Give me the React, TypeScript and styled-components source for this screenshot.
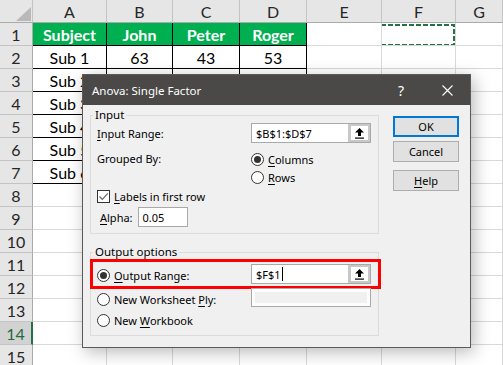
import React from 'react';
import styled, { createGlobalStyle, css } from 'styled-components';

const GlobalStyle = createGlobalStyle`
  html, body {
    margin: 0;
    padding: 0;
    background: #ffffff;
    overflow: hidden;
  }
  * {
    box-sizing: border-box;
  }
`;

const LETTERS = ['A', 'B', 'C', 'D', 'E', 'F', 'G'];

// values of B3:D7 are hidden behind the dialog in the screenshot
const DATA: string[][] = [
  ['Subject', 'John', 'Peter', 'Roger'],
  ['Sub 1', '63', '43', '53'],
  ['Sub 2', '', '', ''],
  ['Sub 3', '', '', ''],
  ['Sub 4', '', '', ''],
  ['Sub 5', '', '', ''],
  ['Sub 6', '', '', ''],
];

const ROW_COUNT = 15;
const ACTIVE_ROW = 14;

const Screen = styled.div`
  position: relative;
  width: 503px;
  height: 365px;
  overflow: hidden;
`;

/* ---------- spreadsheet ---------- */

const Sheet = styled.div`
  display: grid;
  grid-template-columns: 33px 74px 66px 67px 67px 75px 74px 47px;
  grid-auto-rows: 23px;
  font-family: Lato, 'Liberation Sans', sans-serif;
  font-size: 16px;
  color: #000;
`;

const Corner = styled.div`
  position: relative;
  background: #e6e6e6;
  border-right: 1px solid #c4c4c4;
  border-bottom: 1px solid #ababab;
  &::after {
    content: '';
    position: absolute;
    right: 1px;
    bottom: 1px;
    width: 15px;
    height: 14px;
    background: #b9b9b9;
    clip-path: polygon(100% 0, 100% 100%, 0 100%);
  }
`;

const ColHead = styled.div`
  display: flex;
  align-items: center;
  justify-content: center;
  background: #e6e6e6;
  border-right: 1px solid #c4c4c4;
  border-bottom: 1px solid #ababab;
  color: #262626;
`;

const RowHead = styled.div<{ $active?: boolean }>`
  display: flex;
  align-items: center;
  justify-content: center;
  background: #e6e6e6;
  border-right: 1px solid #ababab;
  border-bottom: 1px solid #c4c4c4;
  color: #262626;
  ${(p) =>
    p.$active &&
    css`
      background: #d2d2d2;
      color: #1e6b3b;
      border-right: 2px solid #217346;
    `}
`;

const Cell = styled.div<{ $boxed?: boolean; $head?: boolean }>`
  position: relative;
  display: flex;
  align-items: center;
  justify-content: center;
  white-space: nowrap;
  overflow: hidden;
  border-right: 1px solid ${(p) => (p.$boxed ? '#000' : '#d9d9d9')};
  border-bottom: 1px solid ${(p) => (p.$boxed ? '#000' : '#d9d9d9')};
  ${(p) =>
    p.$head &&
    css`
      background: #00b050;
      color: #fff;
      font-weight: 700;
    `}
`;

const Marquee = styled.svg`
  position: absolute;
  left: -2px;
  top: 1px;
  overflow: visible;
`;

/* ---------- dialog ---------- */

const Dialog = styled.div`
  position: absolute;
  left: 82px;
  top: 74px;
  width: 389px;
  height: 274px;
  display: flex;
  flex-direction: column;
  background: #f0f0f0;
  border: 1px solid #5a5a5a;
  box-shadow: 3px 4px 16px rgba(0, 0, 0, 0.28);
  font-family: 'Noto Sans', 'Open Sans', sans-serif;
  font-size: 11px;
  color: #000;
`;

const TitleBar = styled.div`
  display: flex;
  align-items: center;
  height: 30px;
  background: #4a4948;
  color: #fff;
`;

const Title = styled.div`
  flex: 1;
  padding-left: 9px;
  font-size: 11.5px;
`;

const TitleButton = styled.div`
  width: 46px;
  height: 30px;
  display: flex;
  align-items: center;
  justify-content: center;
  font-size: 14px;
  color: #fff;
`;

const Body = styled.div`
  display: flex;
  padding: 2px 0 0 7px;
`;

const LeftColumn = styled.div`
  width: 289px;
  display: flex;
  flex-direction: column;
`;

const Group = styled.fieldset<{ $gap?: number }>`
  margin: ${(p) => p.$gap ?? 0}px 0 0 0;
  padding: 0 6px 6px 6px;
  border: 1px solid #dcdcdc;
  min-width: 0;
  display: flex;
  flex-direction: column;
`;

const Legend = styled.legend`
  padding: 0 2px;
  margin-left: -4px;
  font-size: 11.5px;
  line-height: 16px;
`;

const Row = styled.div<{ $h?: number; $top?: number }>`
  position: relative;
  display: flex;
  align-items: center;
  height: ${(p) => p.$h ?? 20}px;
  margin-top: ${(p) => p.$top ?? 0}px;
`;

const Highlight = styled.div`
  position: absolute;
  left: -7px;
  right: -9px;
  top: -5px;
  bottom: -5px;
  border: 3px solid #ff0000;
  pointer-events: none;
`;

const Label = styled.span<{ $w?: number; $indent?: number }>`
  display: inline-block;
  width: ${(p) => (p.$w ? `${p.$w}px` : 'auto')};
  padding-left: ${(p) => p.$indent ?? 0}px;
  flex-shrink: 0;
  white-space: nowrap;
`;

const Key = styled.span`
  text-decoration: underline;
  text-underline-offset: 2px;
`;

const RefField = styled.div<{ $disabled?: boolean }>`
  display: flex;
  width: 120px;
  height: 20px;
  border: 1px solid #a9a9a9;
  background: #fff;
  ${(p) =>
    p.$disabled &&
    css`
      height: 19px;
      background: #f0f0f0;
      box-shadow: inset 0 0 0 3px #fdfdfd;
    `}
`;

const RefText = styled.div`
  flex: 1;
  display: flex;
  align-items: center;
  padding-left: 4px;
  font-size: 11px;
`;

const Caret = styled.span`
  display: inline-block;
  width: 1px;
  height: 14px;
  margin-left: 1px;
  background: #000;
`;

const RefButton = styled.div`
  width: 22px;
  display: flex;
  align-items: center;
  justify-content: center;
  background: #fff;
  border-left: 1px solid #c8c8c8;
  box-shadow: inset 0 0 0 2px #c8c8c8;
`;

const SmallInput = styled.div`
  width: 50px;
  height: 20px;
  margin-left: 5px;
  padding-left: 4px;
  display: flex;
  align-items: center;
  background: #fff;
  border: 1px solid #a9a9a9;
`;

const OptionList = styled.div`
  display: flex;
  flex-direction: column;
`;

const Option = styled.label<{ $h?: number }>`
  display: flex;
  align-items: center;
  gap: 4px;
  height: ${(p) => p.$h ?? 18}px;
  white-space: nowrap;
`;

const Radio = styled.span<{ $on?: boolean }>`
  position: relative;
  width: 13px;
  height: 13px;
  border: 1px solid #333;
  border-radius: 50%;
  background: #fff;
  flex-shrink: 0;
  ${(p) =>
    p.$on &&
    css`
      &::after {
        content: '';
        position: absolute;
        left: 2px;
        top: 2px;
        width: 7px;
        height: 7px;
        border-radius: 50%;
        background: #333;
      }
    `}
`;

const Check = styled.span`
  width: 13px;
  height: 13px;
  border: 1px solid #333;
  background: #fff;
  display: flex;
  align-items: center;
  justify-content: center;
  flex-shrink: 0;
`;

const ButtonColumn = styled.div`
  display: flex;
  flex-direction: column;
  margin-left: 14px;
  padding-top: 9px;
`;

const Button = styled.div<{ $default?: boolean; $top?: number }>`
  width: 66px;
  height: 21px;
  margin-top: ${(p) => p.$top ?? 0}px;
  display: flex;
  align-items: center;
  justify-content: center;
  background: #e1e1e1;
  border: 1px solid #adadad;
  ${(p) =>
    p.$default &&
    css`
      border: 2px solid #0078d7;
    `}
`;

function UpArrow() {
  return (
    <svg width="11" height="12" viewBox="0 0 11 12">
      <path d="M5.5 1 L10 5.5 L7 5.5 L7 9 L4 9 L4 5.5 L1 5.5 Z" fill="#000" />
      <rect x="1" y="10.5" width="9" height="1.2" fill="#000" />
    </svg>
  );
}

function CloseIcon() {
  return (
    <svg width="11" height="11" viewBox="0 0 11 11">
      <path d="M0.5 0.5 L10.5 10.5 M10.5 0.5 L0.5 10.5" stroke="#fff" strokeWidth="1.1" />
    </svg>
  );
}

function CheckMark() {
  return (
    <svg width="11" height="11" viewBox="0 0 11 11">
      <path d="M1.5 5.5 L4.3 8.3 L9.8 2.3" stroke="#666" strokeWidth="1.2" fill="none" />
    </svg>
  );
}

function Spreadsheet() {
  const rows = [];
  for (let r = 1; r <= ROW_COUNT; r++) {
    const data = DATA[r - 1];
    rows.push(
      <React.Fragment key={r}>
        <RowHead $active={r === ACTIVE_ROW}>{r}</RowHead>
        {LETTERS.map((letter, c) => {
          const value = data && c < 4 ? data[c] : '';
          return (
            <Cell key={letter} $boxed={!!data && c < 4} $head={r === 1 && c < 4}>
              {value}
              {r === 1 && letter === 'F' && (
                <Marquee width="75" height="22">
                  <rect
                    x="1"
                    y="1"
                    width="73"
                    height="20"
                    fill="none"
                    stroke="#217346"
                    strokeWidth="2"
                    strokeDasharray="5 2"
                  />
                </Marquee>
              )}
            </Cell>
          );
        })}
      </React.Fragment>
    );
  }

  return (
    <Sheet>
      <Corner />
      {LETTERS.map((l) => (
        <ColHead key={l}>{l}</ColHead>
      ))}
      {rows}
    </Sheet>
  );
}

function AnovaDialog() {
  return (
    <Dialog>
      <TitleBar>
        <Title>Anova: Single Factor</Title>
        <TitleButton>?</TitleButton>
        <TitleButton>
          <CloseIcon />
        </TitleButton>
      </TitleBar>
      <Body>
        <LeftColumn>
          <Group>
            <Legend>Input</Legend>
            <Row>
              <Label $w={154}>
                <Key>I</Key>nput Range:
              </Label>
              <RefField>
                <RefText>$B$1:$D$7</RefText>
                <RefButton>
                  <UpArrow />
                </RefButton>
              </RefField>
            </Row>
            <Row $h={36} $top={7}>
              <Label $w={154} style={{ alignSelf: 'flex-start', lineHeight: '18px' }}>
                Grouped By:
              </Label>
              <OptionList>
                <Option>
                  <Radio $on />
                  <span>
                    <Key>C</Key>olumns
                  </span>
                </Option>
                <Option>
                  <Radio />
                  <span>
                    <Key>R</Key>ows
                  </span>
                </Option>
              </OptionList>
            </Row>
            <Row $h={18} $top={1}>
              <Option>
                <Check>
                  <CheckMark />
                </Check>
                <span>
                  <Key>L</Key>abels in first row
                </span>
              </Option>
            </Row>
            <Row $top={2}>
              <Label $indent={3}>
                <Key>A</Key>lpha:
              </Label>
              <SmallInput>0.05</SmallInput>
            </Row>
          </Group>

          <Group $gap={10}>
            <Legend>Output options</Legend>
            <Row $top={4}>
              <Highlight />
              <Label $w={154}>
                <Option $h={20} style={{ paddingTop: 3 }}>
                  <Radio $on />
                  <span>
                    <Key>O</Key>utput Range:
                  </span>
                </Option>
              </Label>
              <RefField>
                <RefText>
                  $F$1
                  <Caret />
                </RefText>
                <RefButton>
                  <UpArrow />
                </RefButton>
              </RefField>
            </Row>
            <Row $top={3}>
              <Label $w={154}>
                <Option $h={20} style={{ paddingTop: 4 }}>
                  <Radio />
                  <span>
                    New Worksheet <Key>P</Key>ly:
                  </span>
                </Option>
              </Label>
              <RefField $disabled />
            </Row>
            <Row $h={18} $top={4}>
              <Option>
                <Radio />
                <span>
                  New <Key>W</Key>orkbook
                </span>
              </Option>
            </Row>
          </Group>
        </LeftColumn>

        <ButtonColumn>
          <Button $default>OK</Button>
          <Button $top={4}>Cancel</Button>
          <Button $top={8}>
            <span>
              <Key>H</Key>elp
            </span>
          </Button>
        </ButtonColumn>
      </Body>
    </Dialog>
  );
}

export default function App() {
  return (
    <>
      <GlobalStyle />
      <Screen>
        <Spreadsheet />
        <AnovaDialog />
      </Screen>
    </>
  );
}
